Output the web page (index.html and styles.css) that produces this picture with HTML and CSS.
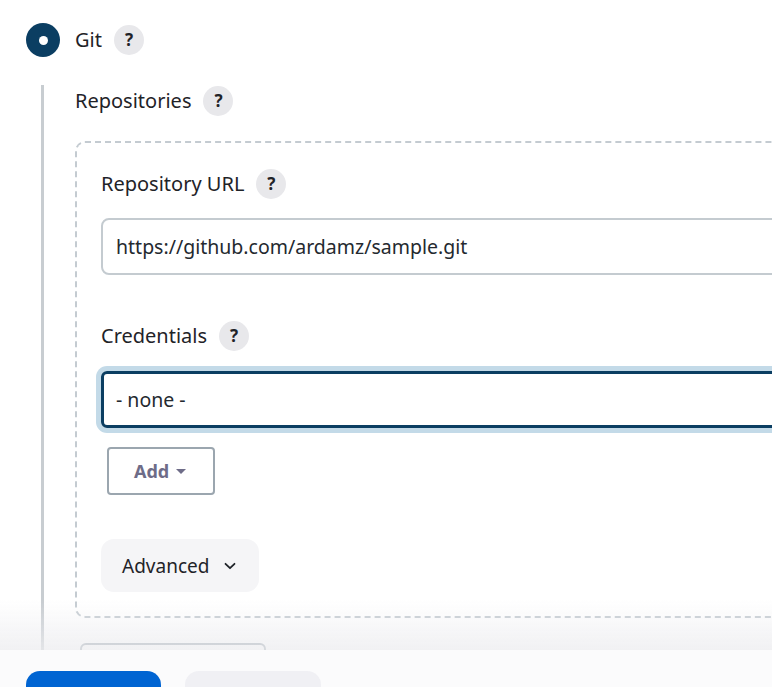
FILE: index.html
```html
<!DOCTYPE html>
<html lang="en">
<head>
<meta charset="utf-8">
<title>Git SCM</title>
<link rel="stylesheet" href="styles.css">
</head>
<body>
<div class="page">
  <div class="radio-row">
    <span class="radio"><span class="radio-dot"></span></span>
    <span class="label">Git</span>
    <span class="help">?</span>
  </div>
  <div class="nested">
    <div class="label-row repos-row">
      <span class="label">Repositories</span>
      <span class="help">?</span>
    </div>
    <div class="repo-box">
      <div class="label-row url-row">
        <span class="label">Repository URL</span>
        <span class="help">?</span>
      </div>
      <div class="text-input">https://github.com/ardamz/sample.git</div>
      <div class="label-row cred-row">
        <span class="label">Credentials</span>
        <span class="help">?</span>
      </div>
      <div class="select-input">- none -</div>
      <button class="add-btn">Add <span class="caret"></span></button>
      <button class="adv-btn">Advanced
        <svg class="chev" width="14" height="14" viewBox="0 0 14 14"><path d="M2.5 4.8 L7 9.2 L11.5 4.8" fill="none" stroke="#1f2328" stroke-width="1.8" stroke-linecap="round" stroke-linejoin="round"/></svg>
      </button>
    </div>
    <button class="add-repo-btn" aria-label="Add Repository"></button>
  </div>
</div>
<div class="footer">
  <button class="save-btn" aria-label="Save"></button>
  <button class="apply-btn" aria-label="Apply"></button>
</div>
</body>
</html>
```
FILE: styles.css
```css
html, body {
  margin: 0;
  padding: 0;
  background: #ffffff;
  overflow: hidden;
}
body {
  font-family: "Noto Sans", "Open Sans", "DejaVu Sans", sans-serif;
  color: #1f2328;
  width: 772px;
  height: 687px;
}
.page {
  padding: 23px 0 0 26px;
  width: 1100px;
}
.radio-row {
  display: flex;
  align-items: center;
  height: 34px;
}
.radio {
  width: 34px;
  height: 34px;
  border-radius: 50%;
  background: #0b3e62;
  display: flex;
  align-items: center;
  justify-content: center;
  margin-right: 15px;
}
.radio-dot {
  width: 9px;
  height: 9px;
  border-radius: 50%;
  background: #ffffff;
}
.label {
  font-size: 20px;
  line-height: 28px;
  color: #1f2328;
}
.help {
  width: 30px;
  height: 30px;
  border-radius: 50%;
  background: #e8e8eb;
  color: #1f2328;
  font-weight: 700;
  font-size: 17px;
  line-height: 30px;
  display: inline-flex;
  align-items: center;
  justify-content: center;
  margin-left: 12px;
  font-family: "Noto Sans", sans-serif;
}
.nested {
  margin-top: 28px;
  margin-left: 15px;
  border-left: 3px solid #c8cdd1;
  padding-left: 31px;
}
.label-row {
  display: flex;
  align-items: center;
  height: 28px;
}
.repos-row {
  padding-top: 2px;
}
.repo-box {
  margin-top: 26px;
  border: 2px dashed #c4cbd1;
  border-radius: 10px;
  padding: 27px 0 24px 24px;
}
.text-input {
  margin-top: 20px;
  height: 53px;
  border: 2px solid #c4cbd0;
  border-radius: 8px;
  font-size: 19.5px;
  line-height: 53px;
  padding-left: 13px;
  color: #24292f;
}
.cred-row {
  margin-top: 47px;
}
.select-input {
  margin-top: 21px;
  height: 51px;
  border: 3px solid #0b3e62;
  border-radius: 6px;
  box-shadow: 0 0 0 5px #c3dae8;
  font-size: 19.5px;
  line-height: 51px;
  padding-left: 12px;
  color: #24292f;
}
.add-btn {
  display: flex;
  align-items: center;
  gap: 7px;
  margin: 19px 0 0 6px;
  width: 108px;
  height: 48px;
  border: 2px solid #9ba6af;
  border-radius: 4px;
  background: #ffffff;
  color: #6e6c88;
  font-family: inherit;
  font-weight: 700;
  font-size: 18px;
  padding: 0 0 0 25px;
}
.caret {
  width: 0;
  height: 0;
  border-left: 5px solid transparent;
  border-right: 5px solid transparent;
  border-top: 5px solid #6e6c88;
}
.adv-btn {
  display: flex;
  align-items: center;
  margin-top: 44px;
  width: 158px;
  height: 53px;
  border: none;
  border-radius: 13px;
  background: #f5f5f7;
  color: #1f2328;
  font-family: inherit;
  font-size: 19px;
  padding: 0 0 0 21px;
  gap: 14px;
}
.chev {
  display: block;
}
.add-repo-btn {
  margin-top: 25px;
  margin-left: 5px;
  width: 186px;
  height: 48px;
  border: 2px solid #9ba6af;
  border-radius: 6px;
  background: #ffffff;
}
.footer {
  position: fixed;
  left: 0;
  right: 0;
  bottom: 0;
  height: 37px;
  background: #fbfbfc;
  display: flex;
  gap: 24px;
  padding: 21px 0 0 26px;
  box-sizing: border-box;
}
.footer::before {
  content: "";
  position: absolute;
  left: 0;
  right: 0;
  bottom: 37px;
  height: 50px;
  background: linear-gradient(to bottom, rgba(240,240,242,0), rgba(236,236,239,0.75));
  pointer-events: none;
}
.save-btn, .apply-btn {
  width: 135px;
  height: 48px;
  border: none;
  border-radius: 14px;
  flex-shrink: 0;
}
.save-btn {
  background: #0064d2;
}
.apply-btn {
  background: #f0f0f4;
  width: 136px;
}
```
